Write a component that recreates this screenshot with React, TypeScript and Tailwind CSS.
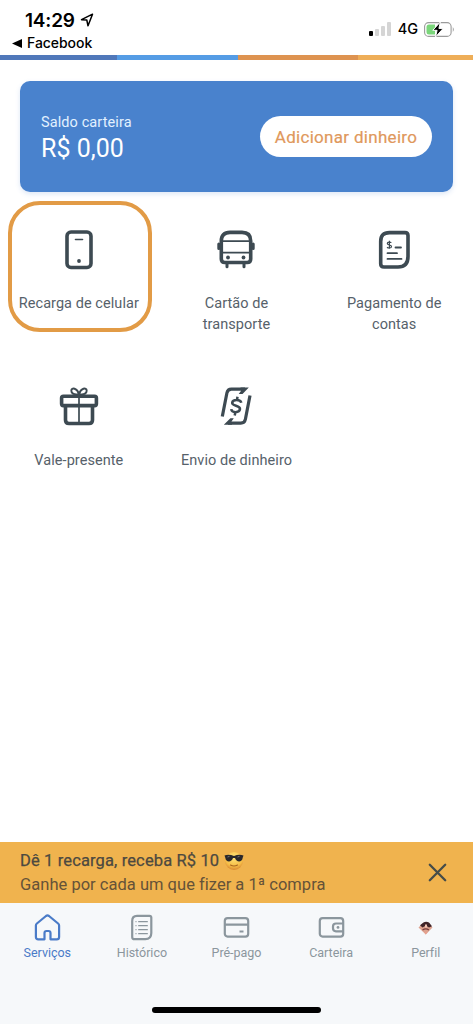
import type { ReactNode } from "react";

function PhoneIcon() {
  return (
    <svg width="40" height="40" viewBox="0 0 40 40" fill="none" stroke="#3d4a52">
      <rect x="8" y="2" width="24" height="35.5" rx="4" strokeWidth="3.6" />
      <path d="M16.5 9.5h7" strokeWidth="1.6" strokeLinecap="round" />
      <circle cx="20" cy="31" r="1.9" fill="#3d4a52" stroke="none" />
    </svg>
  );
}

function BusIcon() {
  return (
    <svg width="40" height="40" viewBox="0 0 40 40" fill="none" stroke="#3d4a52">
      <path d="M5.3 11Q5.3 2.4 14 2.4h12Q34.7 2.4 34.7 11V29Q34.7 32.5 31.2 32.5H8.8Q5.3 32.5 5.3 29Z" strokeWidth="3.6" />
      <path d="M5 11.2h30M5 22.700h30" strokeWidth="1.7" />
      <path d="M2.800 14v4.500M37.200 14v4.500" strokeWidth="3" strokeLinecap="round" />
      <path d="M11 33v3.700M28 33v3.700" strokeWidth="3" strokeLinecap="round" />
      <g fill="#3d4a52" stroke="none">
        <circle cx="12" cy="27.500" r="1.900" />
        <circle cx="27.500" cy="27.500" r="1.900" />
      </g>
    </svg>
  );
}

function BillIcon() {
  return (
    <svg width="40" height="40" viewBox="0 0 40 40" fill="none" stroke="#3d4a52">
      <path d="M15.500 2.600H31Q34 2.600 34 5.600V26.500Q34 37 24 37H10Q6.700 37 6.700 33.700V11.500Q6.700 2.600 15.500 2.600Z" strokeWidth="3.6" />
      <path d="M21.500 17.500h5.500M13.500 23.200h9.500M13.500 28.900h14" strokeWidth="1.800" strokeLinecap="round" />
      <path d="M17.300 12.800c-.6-1-4-1.100-4 .7 0 1.900 4.200 1.100 4.200 3 0 1.900-3.600 1.900-4.400.6M15.400 10.700v8" strokeWidth="1.200" />
    </svg>
  );
}

function GiftIcon() {
  return (
    <svg width="40" height="40" viewBox="0 0 40 40" fill="none" stroke="#3d4a52" strokeLinejoin="round">
      <rect x="2.600" y="9.300" width="34.800" height="9.300" rx="1.800" strokeWidth="3.600" />
      <path d="M6.500 19.500V33Q6.500 36.500 10 36.500H30Q33.500 36.500 33.500 33V19.500" strokeWidth="3.600" />
      <path d="M20 9v27" strokeWidth="1.700" />
      <path d="M20 7.800C16 7.800 12.300 6.500 12.300 3.800C12.300 0 18.500 .8 20 7.800C21.500 .8 27.700 0 27.700 3.800C27.700 6.500 24 7.800 20 7.800Z" strokeWidth="1.900" />
    </svg>
  );
}

function TransferIcon() {
  return (
    <svg width="40" height="40" viewBox="0 0 40 40" fill="none" stroke="#3d4a52">
      <path d="M6.300 29.500L10.900 6Q11.600 2.100 15.400 2.100H29" strokeWidth="3.200" />
      <path d="M34 8.500L29.400 32.200Q28.600 36.100 24.800 36.100H12" strokeWidth="3.200" />
      <path d="M24.500 .5h8.300l-6.300 6.500h-3.800l2.400-3.200ZM16 37.700H7.800l6.600-6.500h3.400l-2.300 3.200Z" fill="#3d4a52" stroke="none" />
      <path d="M25.300 15.800C24.500 12.200 16.700 12.200 16.200 15.700C15.700 19.500 24.500 18.100 24 22.200C23.500 26.100 15.700 26.100 15.200 22.200M21.500 9.800l-.6 3.400M19.400 25l-.7 3.600" strokeWidth="2.500" />
    </svg>
  );
}

function Service({ icon, children, highlighted = false }: { icon: ReactNode; children: ReactNode; highlighted?: boolean }) {
  return (
    <div className="relative flex flex-col items-center pt-[39px] text-center">
      {highlighted && <span className="absolute left-[8px] top-[10px] h-[131px] w-[144px] rounded-[32px] border-4 border-[#e29b46]" />}
      {icon}
      <p className="mt-[24px] whitespace-nowrap text-[14.5px] leading-[20.5px] tracking-[0.06px] text-[#56616a]">{children}</p>
    </div>
  );
}

function Tab({ icon, label, active = false }: { icon: ReactNode; label: string; active?: boolean }) {
  return (
    <div className={active ? "flex flex-1 flex-col items-center text-[#4a7bc8]" : "flex flex-1 flex-col items-center text-[#8b969d]"}>
      {icon}
      <span className="mt-[4px] text-[12.5px] leading-[16px] tracking-[-0.02px]">{label}</span>
    </div>
  );
}

export default function App() {
  return (
    <div className="flex h-[1024px] w-[473px] flex-col overflow-hidden bg-white font-['Roboto',sans-serif]">
      <header className="flex h-[55px] shrink-0 justify-between font-['Inter',sans-serif] text-black">
        <div>
          <div className="flex h-[34px] items-center gap-[5px] pl-[25px] pt-[6px]">
            <span className="text-[19px] font-semibold leading-none tracking-[-0.2px]">14:29</span>
            <svg width="14" height="14" viewBox="0 0 14 14" fill="none" stroke="black" strokeWidth="1.5" strokeLinejoin="round">
              <path d="M12.5 1.2L1.500 6.700l5.300 .3 1.200 5.800Z" />
            </svg>
          </div>
          <div className="flex h-[18px] items-center gap-[5px] pl-[12px]">
            <svg width="10" height="9" viewBox="0 0 10 9"><path d="M0 4.5L10 0v9Z" fill="black" /></svg>
            <span className="text-[14px] font-medium leading-none tracking-[-0.05px]">Facebook</span>
          </div>
        </div>
        <div className="flex h-[31px] items-center pr-[18px] pt-[27px]">
          <svg width="22" height="14" viewBox="0 0 22 14">
            <rect x="0" y="9" width="4" height="5" rx="1" fill="black" />
            <rect x="6" y="7" width="4" height="7" rx="1" fill="#d5d5d5" />
            <rect x="12" y="4" width="4" height="10" rx="1" fill="#d5d5d5" />
            <rect x="18" y="0" width="4" height="14" rx="1" fill="#d5d5d5" />
          </svg>
          <span className="ml-[7px] mr-[6px] text-[14.500px] font-medium leading-none">4G</span>
          <svg width="31" height="15" viewBox="0 0 31 15">
            <rect x=".6" y=".6" width="26.5" height="13.8" rx="4" fill="white" stroke="#9b9b9b" strokeWidth="1.1" />
            <path d="M5 2.5h6v10H5q-2.500 0-2.500-2.500V5q0-2.500 2.500-2.500Z" fill="#7bd67b" />
            <path d="M16.300 0L8.800 8.300h4.300L11.500 15l7.700-8.600h-4.300Z" fill="black" stroke="white" strokeWidth="1" />
            <path d="M28.800 5q2 2.500 0 5Z" fill="#9b9b9b" />
          </svg>
        </div>
      </header>
      <div className="flex h-[5px] shrink-0">
        <div className="w-[117px] bg-[#5078ba]" />
        <div className="w-[121px] bg-[#559ce5]" />
        <div className="w-[120px] bg-[#de9350]" />
        <div className="flex-1 bg-[#eeae58]" />
      </div>

      <main className="flex-1">
        <section className="mx-[20px] mt-[21px] flex h-[111px] items-center justify-between rounded-[10px] bg-[#4982cd] pl-[21px] pr-[21px] shadow-[0_2px_5px_#4982cd30]">
          <div className="pt-[3px] text-white">
            <p className="text-[14.5px] leading-[20px] tracking-[0.1px] text-[#e2f1ff]">Saldo carteira</p>
            <p className="text-[25px] leading-[31px] tracking-[0px]">R$ 0,00</p>
          </div>
          <button className="h-[41px] w-[172px] whitespace-nowrap rounded-full bg-white pt-[2px] text-[17px] tracking-[0.3px] text-[#df985c] [-webkit-text-stroke:0.2px_#df985c]">
            Adicionar dinheiro
          </button>
        </section>
        <div className="mt-[-1px] grid auto-rows-[157px] grid-cols-3">
          <Service icon={<PhoneIcon />} highlighted>Recarga de celular</Service>
          <Service icon={<BusIcon />}>Cartão de<br />transporte</Service>
          <Service icon={<BillIcon />}>Pagamento de<br />contas</Service>
          <Service icon={<GiftIcon />}>Vale-presente</Service>
          <Service icon={<TransferIcon />}>Envio de dinheiro</Service>
        </div>
      </main>

      <aside className="flex h-[61px] shrink-0 items-center justify-between bg-[#f0b34e] pl-[20px] pr-[26px]">
        <div className="whitespace-nowrap leading-[24px] text-[#655238]">
          <p className="flex items-center gap-[6px] text-[#4c4940]">
            <span className="w-[198px] text-[16.5px] tracking-[0.13px] [-webkit-text-stroke:0.25px_#4c4940]">Dê 1 recarga, receba R$ 10</span>
            <svg width="20" height="20" viewBox="0 0 20 20">
              <defs>
                <radialGradient id="face" cx=".5" cy=".3" r=".75">
                  <stop stopColor="#ffe477" />
                  <stop offset=".65" stopColor="#f6bd48" />
                  <stop offset="1" stopColor="#d27a2c" />
                </radialGradient>
              </defs>
              <circle cx="10" cy="10" r="9" fill="url(#face)" />
              <path d="M.5 4.5Q5 3 10 5Q15 3 19.5 4.5l-.8 2.200C18.300 11.500 12.400 11.800 11 7H9C7.600 11.800 1.700 11.500 1.300 6.700Z" fill="#29272b" />
              <path d="M3.5 6l2-.6M13.5 6l2-.6" stroke="#77777b" />
              <path d="M6.500 14q3.500 2 7 0" fill="none" stroke="#a8641f" strokeWidth="1.100" strokeLinecap="round" />
            </svg>
          </p>
          <p className="text-[16.5px] tracking-[0.02px]">Ganhe por cada um que fizer a 1ª compra</p>
        </div>
        <svg width="19" height="19" viewBox="0 0 19 19" stroke="#454c49" strokeWidth="2.3" strokeLinecap="round">
          <path d="M1.800 1.800l15.400 15.400M17.200 1.800L1.800 17.200" />
        </svg>
      </aside>

      <footer className="flex h-[121px] shrink-0 flex-col items-center justify-between bg-[#f6f8fa] pb-[11px] pt-[11px]">
        <nav className="flex w-full">
          <Tab active label="Serviços" icon={
            <svg width="27" height="27" viewBox="0 0 27 27" fill="none" stroke="currentColor" strokeWidth="2.2" strokeLinejoin="round">
              <path d="M10.500 25.300H4.300Q1.900 25.300 1.900 22.900V11.500Q1.900 10.300 2.900 9.500L12 2Q13.500 .9 15 2l9.100 7.500q1 .8 1 2V22.900q0 2.400-2.400 2.400h-6.200V19q0-2-2-2h-2q-2 0-2 2Z" />
            </svg>
          } />
          <Tab label="Histórico" icon={
            <svg width="27" height="27" viewBox="0 0 27 27" fill="none" stroke="currentColor" strokeWidth="2.2">
              <path d="M9 1.800H21.500q1.800 0 1.800 1.800V19q0 6.200-6 6.200H6.500Q4.200 25.200 4.200 22.900V7Q4.200 1.800 9 1.800Z" />
              <path d="M10.200 7.600h9.600M10.200 11.600h9.600M10.200 15.600h9.600M10.200 19.600h9.600M7.500 7.600h1M7.500 11.600h1M7.500 15.600h1M7.500 19.600h1" strokeWidth="1.2" />
            </svg>
          } />
          <Tab label="Pré-pago" icon={
            <svg width="27" height="27" viewBox="0 0 27 27" fill="none" stroke="currentColor" strokeWidth="2.2">
              <rect x="1.800" y="4.200" width="23.4" height="18.4" rx="2.800" />
              <path d="M2 10.700h23M16.500 17.500h4" />
            </svg>
          } />
          <Tab label="Carteira" icon={
            <svg width="27" height="27" viewBox="0 0 27 27" fill="none" stroke="currentColor" strokeWidth="2.2">
              <rect x="1.800" y="4.200" width="23.4" height="18.4" rx="2.800" />
              <path d="M25 9.500h-7q-3 0-3 3v1.800q0 3 3 3h7" />
              <circle cx="20" cy="13.400" r="1.400" fill="currentColor" stroke="none" />
            </svg>
          } />
          <Tab label="Perfil" icon={
            <svg width="27" height="27" viewBox="0 0 27 27">
              <path d="M6.500 13.500L11 9.300Q14 7 17 9.300l3.500 4.200-6.700 7Z" fill="#dda28e" />
              <path d="M8 11.300L11.500 8.500Q14 6.800 17 8.500l3 3.800-3 1.200-3-2-3.500 2Z" fill="#3f2528" />
              <path d="M13 10.500h2v3h-2Z" fill="#f2c4b2" />
              <path d="M10.500 16q3.300-2.400 6.400 0" fill="none" stroke="#783d3b" strokeWidth="1.3" />
              <path d="M12 18h3.500l-1.700 2.500Z" fill="#e9a08e" />
            </svg>
          } />
        </nav>
        <div className="h-[6px] w-[169px] rounded-full bg-black" />
      </footer>
    </div>
  );
}
